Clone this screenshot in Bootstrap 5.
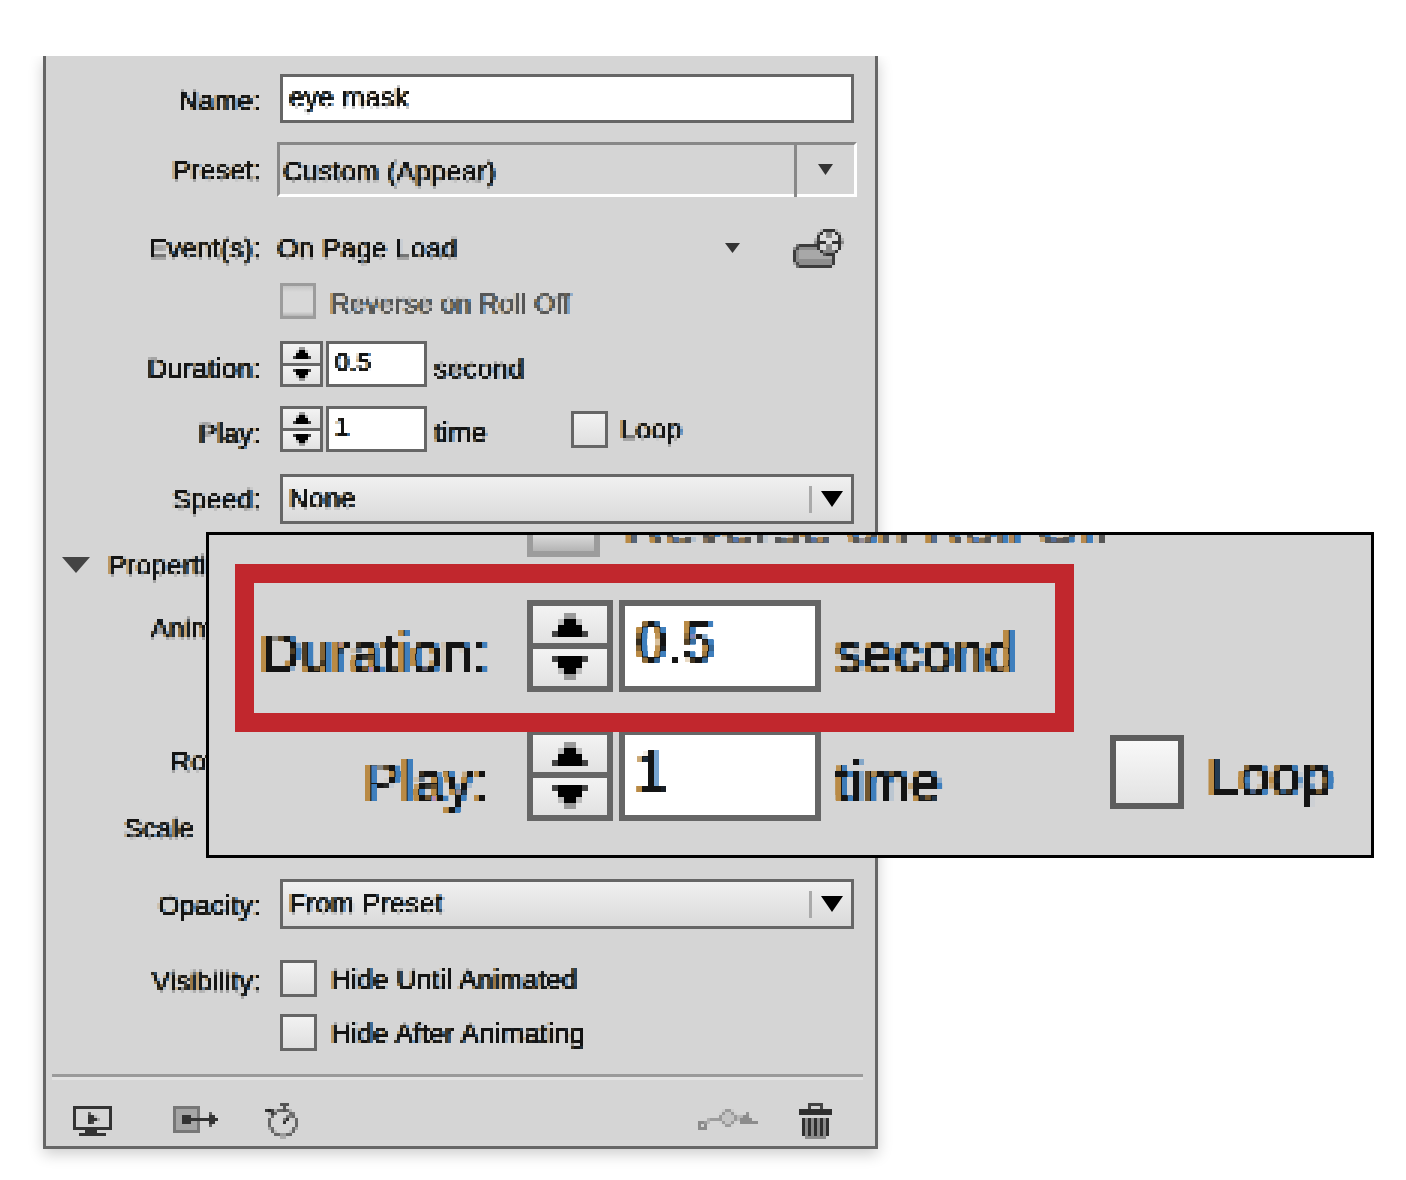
<!doctype html>
<html lang="en">
<head>
<meta charset="utf-8">
<title>Animation panel</title>
<link href="https://cdn.jsdelivr.net/npm/bootstrap@5.3.0/dist/css/bootstrap.min.css" rel="stylesheet">
<style>
html,body{background:#fff;margin:0;}
body{font-family:"Liberation Sans",Arial,sans-serif;color:#141414;}
.stage{position:relative;width:1406px;height:1180px;overflow:hidden;padding:56px 0 0 43px;}
.panel{width:835px;height:1093px;padding-top:18px;background:#d5d5d5;border:3px solid #666;border-top:0;box-shadow:0 5px 14px rgba(0,0,0,.2);clip-path:inset(0 -30px -30px -30px);font-size:27.5px;line-height:1;letter-spacing:.25px;}
.panel .txt{filter:url(#pix3);text-shadow:-1px 0 #b98a45,1px 0 #3f7fbd;-webkit-text-stroke:.55px currentColor;padding-top:2px;}
.lab{width:215px;margin-right:19px;text-align:right;flex:none;}
.mutedtxt{color:#565656;}
.rw{display:flex;align-items:center;}
.h36{height:36px}.h40{height:40px}
.m15{margin-top:15px}.m18{margin-top:18px}.m19{margin-top:19px}.m21{margin-top:21px}.m22{margin-top:22px}.m23{margin-top:23px}.m27{margin-top:27px}.m31{margin-top:31px}.m93{margin-top:93px}
.panel .form-control.fld{height:49px;width:574px;border:3px solid #666;border-radius:0;background:#fff;padding:0 6px 3px;font-size:27.5px;line-height:1;color:#141414;box-shadow:none;display:flex;align-items:center;}
.presetbox{margin-left:-3px;width:580px;height:55px;border-style:solid;border-width:3px;border-color:#888 #fff #fff #888;display:flex;align-items:center;}
.panel .presetname{flex:1;padding:5px 0 0 3px;}
.presetdiv{width:3px;align-self:stretch;background:#888;margin-bottom:-3px;}
.presetarr{width:57px;display:flex;justify-content:center;}
.evname{margin-left:-3px;width:448px;}
.evarr{width:15px;}
.evicon{margin-left:50px;}
.stp{display:flex;flex-direction:column;background:#666;flex:none;}
.stp span{flex:1;display:flex;align-items:center;justify-content:center;background:linear-gradient(#f3f3f3,#e2e2e2);}
.stp svg{display:block;shape-rendering:crispEdges;}
.stp-s{width:43px;height:46px;border:3px solid #666;gap:3px;}
.stp-s svg{width:18px;height:12px;}
.stp-l{width:86px;height:92px;border:6px solid #666;gap:6px;}
.stp-l svg{width:36px;height:24px;}
.val{background:#fff;border:solid #666;flex:none;display:flex;}
.val-s{width:101px;height:46px;border-width:3px;margin-left:3px;padding:6px 0 0 6px;font-size:25.5px;}
.val-l{width:202px;height:92px;border-width:6px;margin-left:6px;padding:9px 0 0 11px;font-size:55px;}
.val-s .txt{padding-top:0 !important;}
.unit-s{margin-left:7px;}
.panel .unit-s{padding-top:9px;}
.unit-l{margin-left:14px;padding-top:26px;}
.panel .lb10{padding-top:10px;}
.panel .form-check-input.ck{width:37px;height:37px;margin:0;border:3px solid #666;border-radius:0;background:linear-gradient(#f2f2f2,#dfdfdf);flex:none;box-shadow:none;}
.panel .form-check-input.ck.dis{border-color:#9c9c9c;background:linear-gradient(#c4c4c4,#d8d8d8 20%,#d8d8d8 85%,#b4b4b4);opacity:1;width:36px;height:36px;}
.cklab{margin-left:14px;}
.panel .cklab{padding-top:4px;}
.panel .revlab{padding-top:6px;letter-spacing:.05px;}
.panel .timeu{width:137px;padding-top:7px;}
.lpbox{margin-top:-2px;}
.lplab{margin-left:12px;}
.sel{width:574px;height:50px;border:3px solid #666;background:linear-gradient(#f0f0f0,#dadada);display:flex;align-items:center;padding-left:6px;}
.panel .seltxt{flex:1;padding-bottom:3px;}
.seldiv{width:3px;height:27px;background:#aaa;}
.selarr{width:39px;display:flex;justify-content:center;}
.tri{margin-left:16px;margin-right:18px;flex:none;}
.scalelab{margin-left:78px;}
.rule{margin:24px 0 0 6px;width:811px;height:6px;border-top:3px solid #9a9a9a;border-bottom:3px solid #e2e2e2;}
.iconrow{display:flex;margin-top:20px;}
.iconrow svg{display:block;flex:none;height:40px;}
.pixd{filter:url(#pix3);}
.i1{margin-left:24px}.i2{margin-left:55px}.i3{margin-left:45px}.i4{margin-left:393px}.i5{margin-left:35px}
.callout{position:absolute;left:206px;top:532px;width:1168px;height:326px;background:#d5d5d5;border:3px solid #000;overflow:hidden;font-size:55px;line-height:1;letter-spacing:.6px;}
.callout .txt{filter:url(#pix6);text-shadow:-2px 0 #b98a45,2px 0 #3f7fbd;}
.top-row{display:flex;align-items:center;margin:-51px 0 0 318px;height:73px;}
.bigck{width:73px;height:73px;border:6px solid #9c9c9c;background:linear-gradient(#c4c4c4,#d8d8d8 20%,#d8d8d8 75%,#b4b4b4);flex:none;}
.bigrev{margin-left:25px;padding-top:9px;color:#565656;white-space:nowrap;letter-spacing:.3px;}
.hilite{position:relative;z-index:1;margin:7px 0 0 26px;width:839px;height:168px;border:19px solid #c1272d;padding-top:17px;display:flex;align-items:flex-start;}
.lab-a{width:235px;margin-right:38px;text-align:right;flex:none;padding-top:26px;}
.lower{display:flex;margin-top:-3px;align-items:flex-start;}
.lab-b{width:280px;margin-right:38px;text-align:right;flex:none;padding-top:26px;}
.bigloop{width:74px;height:74px;border:6px solid #5d5d5d;background:linear-gradient(#f8f8f8,#e3e3e3);margin:6px 0 0 0;flex:none;}
.timeb{width:275px;flex:none;}
.loopb{margin-left:24px;padding-top:20px;}
.sr-defs{position:absolute;width:0;height:0;}
</style>
</head>
<body>
<svg class="sr-defs" aria-hidden="true"><defs>
<filter id="pix6" x="-2%" y="-2%" width="104%" height="104%" primitiveUnits="userSpaceOnUse" color-interpolation-filters="sRGB">
<feFlood x="2" y="2" width="2" height="2"/>
<feComposite width="6" height="6"/>
<feTile result="a"/>
<feComposite in="SourceGraphic" in2="a" operator="in"/>
<feMorphology operator="dilate" radius="2"/>
</filter>
<filter id="pix3" x="-2%" y="-2%" width="104%" height="104%" primitiveUnits="userSpaceOnUse" color-interpolation-filters="sRGB">
<feFlood x="1" y="1" width="1" height="1"/>
<feComposite width="3" height="3"/>
<feTile result="a"/>
<feComposite in="SourceGraphic" in2="a" operator="in"/>
<feMorphology operator="dilate" radius="1"/>
</filter>
<symbol id="aup" viewBox="0 0 6 4">
<path fill="#999" d="M2 0h2v1H2z"/><path fill="#bbb" d="M1 1h4v1H1z"/><path fill="#000" d="M2 1h2v1H2zM1 2h4v2H1z"/><path fill="#444" d="M0 3h1v1H0zM5 3h1v1H5z"/>
</symbol>
<symbol id="adn" viewBox="0 0 6 4">
<path fill="#999" d="M2 3h2v1H2z"/><path fill="#bbb" d="M1 2h4v1H1z"/><path fill="#000" d="M2 2h2v1H2zM1 0h4v2H1z"/><path fill="#444" d="M0 0h1v1H0zM5 0h1v1H5z"/>
</symbol>
</defs></svg>
<div class="stage">
  <div class="panel">
    <div class="rw">
      <div class="lab txt pt-1">Name:</div>
      <div class="form-control fld" role="textbox"><span class="txt">eye mask</span></div>
    </div>
    <div class="rw m19">
      <div class="lab txt">Preset:</div>
      <div class="presetbox">
        <div class="presetname txt">Custom (Appear)</div>
        <div class="presetdiv"></div>
        <div class="presetarr"><svg width="15" height="11" viewBox="0 0 15 11"><path d="M0 0H15L7.5 11Z" fill="#333"/></svg></div>
      </div>
    </div>
    <div class="rw h40 m31">
      <div class="lab txt">Event(s):</div>
      <div class="evname txt">On Page Load</div>
      <svg class="evarr" width="15" height="10" viewBox="0 0 15 10"><path d="M0 0H15L7.5 10Z" fill="#333"/></svg>
      <svg class="evicon pixd" width="58" height="45" viewBox="788 225 58 45">
        <rect x="793.5" y="245" width="39" height="20" rx="5" fill="#8d8d8d" stroke="#3c3c3c" stroke-width="3"/>
        <path d="M796 254H830" stroke="#a8a8a8" stroke-width="8"/>
        <circle cx="827" cy="241" r="12" fill="#dcdcdc" stroke="#333" stroke-width="3"/>
        <path d="M827 229V238M827 244V253M815 241H824M830 241H839" stroke="#333" stroke-width="3"/>
      </svg>
    </div>
    <div class="rw m15 h36">
      <div class="lab"></div>
      <input type="checkbox" class="form-check-input ck dis" disabled aria-label="Reverse on Roll Off">
      <div class="cklab revlab txt mutedtxt">Reverse on Roll Off</div>
    </div>
    <div class="rw m22">
      <div class="lab txt lb10">Duration:</div>
      <div class="stp stp-s">
        <span><svg><use href="#aup"/></svg></span>
        <span><svg><use href="#adn"/></svg></span>
      </div>
      <div class="val val-s"><span class="txt">0.5</span></div>
      <div class="unit-s txt">second</div>
    </div>
    <div class="rw m19">
      <div class="lab txt lb10">Play:</div>
      <div class="stp stp-s">
        <span><svg><use href="#aup"/></svg></span>
        <span><svg><use href="#adn"/></svg></span>
      </div>
      <div class="val val-s"><span class="txt">1</span></div>
      <div class="unit-s txt timeu">time</div>
      <input type="checkbox" class="form-check-input ck lpbox" aria-label="Loop">
      <div class="txt lplab">Loop</div>
    </div>
    <div class="rw m22">
      <div class="lab txt">Speed:</div>
      <div class="sel">
        <div class="seltxt txt">None</div>
        <div class="seldiv"></div>
        <div class="selarr"><svg width="22" height="16" viewBox="0 0 22 16"><path d="M0 0H22L11 16Z"/></svg></div>
      </div>
    </div>
    <div class="rw h40 m21">
      <svg class="tri" width="28" height="16" viewBox="0 0 28 16"><path d="M0 0H28L14 16Z" fill="#444"/></svg>
      <div class="txt">Properties</div>
    </div>
    <div class="rw h40 m23"><div class="lab txt">Animate:</div></div>
    <div class="rw h40 m93"><div class="lab txt">Rotate:</div></div>
    <div class="rw h40 m27"><div class="txt scalelab">Scale</div></div>
    <div class="rw m31">
      <div class="lab txt pt-1">Opacity:</div>
      <div class="sel">
        <div class="seltxt txt">From Preset</div>
        <div class="seldiv"></div>
        <div class="selarr"><svg width="22" height="16" viewBox="0 0 22 16"><path d="M0 0H22L11 16Z"/></svg></div>
      </div>
    </div>
    <div class="rw m31 h36">
      <div class="lab txt pt-2">Visibility:</div>
      <input type="checkbox" class="form-check-input ck" aria-label="Hide Until Animated">
      <div class="cklab txt">Hide Until Animated</div>
    </div>
    <div class="rw m18 h36">
      <div class="lab"></div>
      <input type="checkbox" class="form-check-input ck" aria-label="Hide After Animating">
      <div class="cklab txt">Hide After Animating</div>
    </div>
    <div class="rule"></div>
    <div class="iconrow">
      <svg class="i1 pixd" width="45" viewBox="70 1100 45 40">
        <rect x="75.5" y="1107.5" width="34" height="21" fill="#d5d5d5" stroke="#333" stroke-width="3"/>
        <path d="M89 1113L99 1119L89 1125Z" fill="#333"/>
        <path d="M86 1130H98V1134H86ZM80 1134H105V1137H80Z" fill="#333"/>
      </svg>
      <svg class="i2 pixd" width="50" viewBox="170 1100 50 40">
        <rect x="173.5" y="1107.5" width="25" height="25" fill="#a6a6a6" stroke="#777" stroke-width="3"/>
        <rect x="181" y="1115" width="10" height="9" fill="#333"/>
        <path d="M190 1118H212V1121H190Z" fill="#333"/>
        <path d="M209 1112L218 1119.5L209 1127Z" fill="#333"/>
      </svg>
      <svg class="i3 pixd" width="37" viewBox="265 1100 37 40">
        <circle cx="283" cy="1123" r="13" fill="none" stroke="#666" stroke-width="3"/>
        <path d="M279 1104H288V1107H285V1111H282V1107H279Z" fill="#555"/>
        <path d="M267 1109L273 1113" stroke="#222" stroke-width="4"/>
        <path d="M283 1123L290 1116" stroke="#333" stroke-width="3"/>
      </svg>
      <svg class="i4 pixd" width="66" viewBox="695 1100 66 40">
        <rect x="698.5" y="1122.5" width="6" height="6" fill="none" stroke="#8a8a8a" stroke-width="3"/>
        <path d="M704 1122L721 1118M735 1118H744" stroke="#9c9c9c" stroke-width="3"/>
        <circle cx="728" cy="1118" r="7" fill="#c4c4c4" stroke="#9a9a9a" stroke-width="3"/>
        <path d="M747 1112L752 1120H759V1124H740V1120Z" fill="#8c8c8c"/>
      </svg>
      <svg class="i5 pixd" width="38" viewBox="796 1100 38 40">
        <path d="M809.5 1110V1105H821.5V1110" fill="none" stroke="#444" stroke-width="3"/>
        <path d="M798 1110H832V1115H798Z" fill="#2f2f2f"/>
        <path d="M802 1118H829V1135L826 1138H805L802 1135Z" fill="#8a8a8a"/>
        <path d="M804.5 1118V1137M810.5 1118V1137M816.5 1118V1137M822.5 1118V1137M827.5 1118V1137" stroke="#2f2f2f" stroke-width="3"/>
      </svg>
    </div>
  </div>
  <div class="callout">
    <div class="top-row">
      <div class="bigck"></div>
      <div class="bigrev txt">Reverse on Roll Off</div>
    </div>
    <div class="hilite">
      <div class="lab-a txt">Duration:</div>
      <div class="stp stp-l">
        <span><svg><use href="#aup"/></svg></span>
        <span><svg><use href="#adn"/></svg></span>
      </div>
      <div class="val val-l"><span class="txt">0.5</span></div>
      <div class="unit-l txt">second</div>
    </div>
    <div class="lower">
      <div class="lab-b txt">Play:</div>
      <div class="stp stp-l">
        <span><svg><use href="#aup"/></svg></span>
        <span><svg><use href="#adn"/></svg></span>
      </div>
      <div class="val val-l"><span class="txt">1</span></div>
      <div class="unit-l txt timeb">time</div>
      <div class="bigloop"></div>
      <div class="loopb txt">Loop</div>
    </div>
  </div>
</div>
</body>
</html>
